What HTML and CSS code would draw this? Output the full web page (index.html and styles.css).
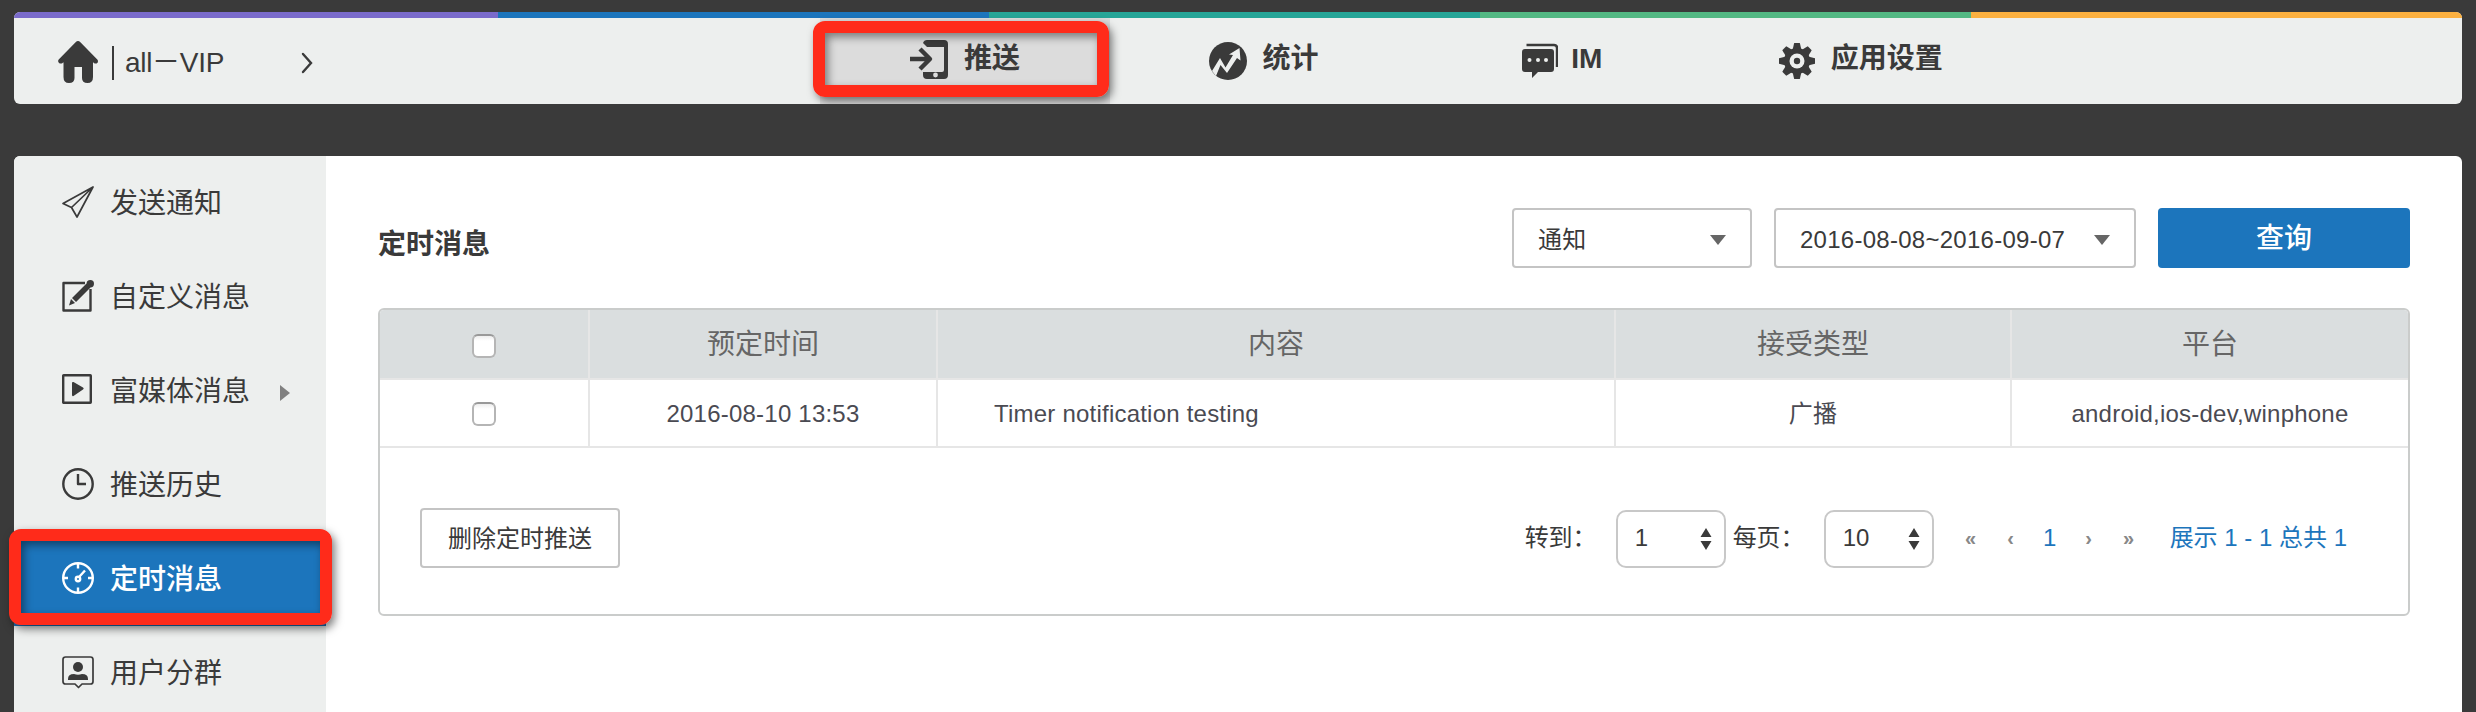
FILE: index.html
```html
<!DOCTYPE html>
<html lang="zh-CN">
<head>
<meta charset="utf-8">
<title>定时消息</title>
<link rel="stylesheet" href="styles.css">
</head>
<body>
<header class="topbar">
  <div class="stripe"></div>
  <div class="topbar-row">
    <div class="brand">
      <svg class="home" width="40" height="42" viewBox="0 0 40 42"><path d="M17.6 1.2a3.4 3.4 0 0 1 4.8 0L39.3 18.5c1.4 1.5.6 4.3-2 4.1-.7 0-1.3-.5-2.3-1.3V36q0 6-5.500 6-5.500 0-5.500-5V26h-7.500V37q0 5-5.500 5-5.500 0-5.500-6V21.300c-1 .8-1.600 1.300-2.300 1.300-2.600.2-3.900-2.600-2.500-4.100z"/></svg>
      <span class="rule"></span>
      <span class="app-name">all－VIP</span>
      <svg class="chevron" width="12" height="22" viewBox="0 0 12 22"><path d="M2 2l8 9-8 9"/></svg>
    </div>
    <nav class="nav">
      <a class="nav-item current">
        <svg width="38" height="40" viewBox="0 0 38 40"><path fill-rule="evenodd" d="M17 1h17a4 4 0 0 1 4 4v31a4 4 0 0 1-4 4H17a4 4 0 0 1-4-4v-3h19a2 2 0 0 0 2-2V8H17l-4-4q1-3 4-3zM25.500 33.600a2.400 2.400 0 1 0 0 4.800 2.400 2.400 0 0 0 0-4.800z"/><path class="line4" d="M0 20h19M10 10l10 10-10 10"/></svg>
        <span>推送</span>
        <i class="marker marker-nav"></i>
      </a>
      <a class="nav-item">
        <svg class="down" width="38" height="38" viewBox="0 0 38 38"><circle cx="19" cy="19" r="19"/><path class="cut" d="M3 29l8-13 5.500 9.500L24 13l-4-.5L30.500 6l1 12.500-3.500-2.500-10 15-6.500-8L7 34z"/></svg>
        <span>统计</span>
      </a>
      <a class="nav-item">
        <svg class="down" width="36" height="36" viewBox="0 0 36 36"><path d="M3 6h26a3 3 0 0 1 3 3v17a3 3 0 0 1-3 3H16l-6 6v-6H3a3 3 0 0 1-3-3V9a3 3 0 0 1 3-3z"/><path class="line2" d="M4.500 2H32q3 0 3 3v19"/><g class="cut"><circle cx="7.500" cy="17" r="2"/><circle cx="16" cy="17" r="2"/><circle cx="24" cy="17" r="2"/></g></svg>
        <span>IM</span>
      </a>
      <a class="nav-item">
        <svg class="down" width="36" height="36" viewBox="-18 -18 36 36"><circle r="13"/><g><path id="tooth" d="M-4.500-11l1.700-7h5.600l1.700 7v22l-1.700 7h-5.600l-1.700-7z"/><use href="#tooth" transform="rotate(45)"/><use href="#tooth" transform="rotate(90)"/><use href="#tooth" transform="rotate(135)"/></g><circle class="cut" r="7.500"/><circle r="3.200"/></svg>
        <span>应用设置</span>
      </a>
    </nav>
  </div>
</header>

<div class="panel">
  <aside class="sidebar">
    <a class="side-item"><svg width="32" height="32" viewBox="0 0 32 32"><path class="line15" d="M1 17.500L31 1 15 31 9.500 21.500zM9.500 21.500L31 1"/></svg><span>发送通知</span></a>
    <a class="side-item"><svg width="32" height="32" viewBox="0 0 32 32"><path class="line2" d="M23 3H1.500v27.500h27V9"/><path d="M24.500 3.500l4 4L14 22l-4-4zM9 19l4 4-6 2.500z"/><circle cx="28.300" cy="3.700" r="3.700"/></svg><span>自定义消息</span></a>
    <a class="side-item"><svg width="32" height="32" viewBox="0 0 32 32"><rect class="line2" x="1.200" y="1.200" width="27.600" height="27.600" rx=".5"/><path d="M10 9q0-1.500 1.500-1l9.500 5.500q1.500 1 0 2L11.500 22q-1.500.5-1.500-1z"/></svg><span>富媒体消息</span><i class="expand"></i></a>
    <a class="side-item"><svg width="32" height="32" viewBox="0 0 32 32"><circle class="line2" cx="16" cy="16" r="14.700"/><path class="line2" d="M16 6v10h8"/></svg><span>推送历史</span></a>
    <a class="side-item selected"><svg width="32" height="32" viewBox="0 0 32 32"><circle class="line2" cx="16" cy="16" r="14.800"/><path class="line2" d="M16 1v5.500M16 25.500V31M1 16h5M26 16h5M17.500 14.500L23 8.500"/><circle class="line2" cx="16" cy="17" r="2.200"/></svg><span>定时消息</span><i class="marker marker-side"></i></a>
    <a class="side-item"><svg width="32" height="34" viewBox="0 0 32 34"><path class="line15" d="M3.500 2h25q2.500 0 2.500 2.500v22q0 2.500-2.500 2.500H20l-3.500 3.500L13 29H3.500Q1 29 1 26.500v-22Q1 2 3.500 2z"/><circle cx="16" cy="12" r="5"/><path d="M6 25v-1q0-5 6-5 4 1.500 8 0 6 0 6 5v1z"/></svg><span>用户分群</span></a>
  </aside>

  <main class="content">
    <div class="toolbar">
      <h1>定时消息</h1>
      <div class="filters">
        <div class="dropdown kind"><span>通知</span><i class="caret"></i></div>
        <div class="dropdown range"><span>2016-08-08~2016-09-07</span><i class="caret"></i></div>
        <button class="query">查询</button>
      </div>
    </div>

    <section class="box">
      <div class="grid head">
        <div><input type="checkbox"></div><div>预定时间</div><div>内容</div><div>接受类型</div><div>平台</div>
      </div>
      <div class="grid row">
        <div><input type="checkbox"></div><div>2016-08-10 13:53</div><div class="text-left">Timer notification testing</div><div>广播</div><div>android,ios-dev,winphone</div>
      </div>
      <div class="footer">
        <button class="remove">删除定时推送</button>
        <div class="pager">
          <span class="goto">转到：</span>
          <div class="stepper"><span>1</span><svg width="12" height="22" viewBox="0 0 12 22"><path d="M6 0l5.500 9H.5zM.5 13h11L6 22z"/></svg></div>
          <span class="per">每页：</span>
          <div class="stepper"><span>10</span><svg width="12" height="22" viewBox="0 0 12 22"><path d="M6 0l5.500 9H.5zM.5 13h11L6 22z"/></svg></div>
          <div class="pages"><span>«</span><span>‹</span><span class="page">1</span><span>›</span><span>»</span></div>
          <span class="summary">展示 1 - 1 总共 1</span>
        </div>
      </div>
    </section>
  </main>
</div>
</body>
</html>
```
FILE: styles.css
```css
* { box-sizing: border-box; }

body {
  margin: 0;
  height: 712px;
  padding: 12px 14px 0;
  overflow: hidden;
  background: #3a3a3a;
  color: #3a3a3a;
  font: 24px/36px "Liberation Sans", "Noto Sans CJK SC", sans-serif;
}

svg { flex: none; fill: #3a3a3a; }

.line15, .line2, .line4 { fill: none; stroke: #3a3a3a; stroke-width: 1.700; stroke-linejoin: round; }
.line2 { stroke-width: 2.400; }
.line4 { stroke-width: 4.400; }
.cut { fill: #edefee; }

.topbar {
  height: 92px;
  border-radius: 6px;
  overflow: hidden;
  background: #edefee;
}

.stripe {
  height: 6px;
  background: linear-gradient(90deg, #7a6bcb 484px, #1c75bc 484px 975px, #26a597 975px 1466px, #53b883 1466px 1957px, #fbb040 1957px);
}

.topbar-row { display: flex; height: 86px; }

.brand {
  display: flex;
  align-items: center;
  width: 806px;
  padding-left: 44px;
  font-size: 28px;
}

.home { margin-top: 1px; }
.rule { width: 2px; height: 34px; margin: 4px 11px 0 14px; background: #3a3a3a; }
.app-name { width: 176px; margin-top: 4px; letter-spacing: -.3px; }
.chevron path { fill: none; stroke: #3a3a3a; stroke-width: 2.400; stroke-linecap: round; }
.chevron { margin-top: 3px; }

.nav { display: flex; gap: 8.600px; }

.nav-item {
  position: relative;
  display: flex;
  align-items: center;
  justify-content: center;
  gap: 16px;
  width: 290px;
  padding-bottom: 4px;
  font-size: 28px;
  font-weight: bold;
}

.nav-item .down { margin-top: 3px; }
.nav-item:nth-child(3) { gap: 13px; }
.current { background: #dcdcdc; }

.marker {
  position: absolute;
  z-index: 2;
  border: 12px solid #ff2b1a;
  border-radius: 12px;
  box-shadow: 3px 4px 8px rgba(0, 0, 0, .5), inset 3px 4px 8px rgba(0, 0, 0, .45);
}

.marker-nav { left: -7px; top: 3px; width: 296px; height: 76px; }
.marker-side { left: -5px; top: -3px; width: 323px; height: 96px; }

.panel {
  display: flex;
  height: 556px;
  margin-top: 52px;
  border-radius: 6px 6px 0 0;
  background: #fff;
}

.sidebar { width: 312px; border-radius: 6px 0 0 0; background: #edefee; }

.side-item {
  position: relative;
  display: flex;
  align-items: center;
  gap: 16px;
  height: 94px;
  padding-left: 48px;
  font-size: 28px;
}

.side-item span { margin-top: 1px; }
.side-item svg { margin-top: -2px; }
.expand { margin: 4px 0 0 14px; border: solid transparent; border-width: 8px 0 8px 10px; border-left-color: #808080; }

.selected { background: #1c75bc; color: #fff; font-weight: 500; }
.selected svg * { stroke: #fff; }

.content { flex: 1; padding: 52px 52px 0; }

.toolbar { display: flex; justify-content: space-between; height: 100px; }
.toolbar h1 { margin: 19px 0 0; font-size: 28px; line-height: 36px; }

.filters { display: flex; gap: 22px; height: 60px; }

.dropdown {
  display: flex;
  align-items: center;
  justify-content: space-between;
  padding: 0 24px;
  border: 2px solid #c4c4c4;
  border-radius: 4px;
  letter-spacing: .27px;
}

.dropdown span { margin-top: 3px; }
.kind { width: 240px; }
.range { width: 362px; }
.caret { margin-top: 4px; border: solid transparent; border-width: 10px 8px 0; border-top-color: #666; }

button { padding: 2px 0 0; border: 0; border-radius: 4px; font: inherit; }
.query { width: 252px; background: #1c75bc; color: #fff; font-size: 28px; font-weight: 500; }

.box { height: 308px; border: 2px solid #cacccb; border-radius: 6px; overflow: hidden; }

.grid { display: grid; grid-template-columns: 210px 348px 678px 396px 1fr; border-bottom: 2px solid #e6e6e6; }
.grid > div { display: flex; align-items: center; justify-content: center; padding-top: 2px; border-right: 2px solid #e6e6e6; }
.grid > div:last-child { border-right: 0; }

.head { height: 70px; background: #dadedf; color: #666; font-size: 28px; }
.row { height: 68px; color: #4a4a52; letter-spacing: .22px; }
.grid > .text-left { justify-content: flex-start; padding-left: 56px; }

input {
  appearance: none;
  width: 24px;
  height: 24px;
  margin: 2px 0 0;
  border: 2px solid #b5b5b5;
  border-top-color: #999;
  border-radius: 6px;
  background: linear-gradient(#eee, #fff 5px);
}
.row input { margin-top: 0; }

.footer { display: flex; justify-content: space-between; padding: 60px 61px 0 40px; }
.remove { width: 200px; height: 60px; border: 2px solid #c4c4c4; background: #fff; color: #3a3a3a; }

.pager { display: flex; align-items: center; height: 62px; white-space: nowrap; }
.goto, .per { width: 91px; margin-top: -3px; }
.per { margin-left: 7px; }

.stepper {
  display: flex;
  align-items: center;
  justify-content: space-between;
  width: 110px;
  height: 58px;
  padding: 0 12px 0 17px;
  border: 2px solid #c8c8c8;
  border-radius: 10px;
}
.stepper span { margin-top: -3px; }

.pages { display: flex; width: 236px; padding-left: 17px; margin-top: -3px; }
.pages span { width: 40px; color: #888; font-size: 20px; font-weight: bold; text-align: center; }
.pages .page { width: 38px; font-size: 24px; font-weight: normal; }
.pages .page, .summary { color: #1c75bc; }
.summary { margin-top: -3px; }
```
